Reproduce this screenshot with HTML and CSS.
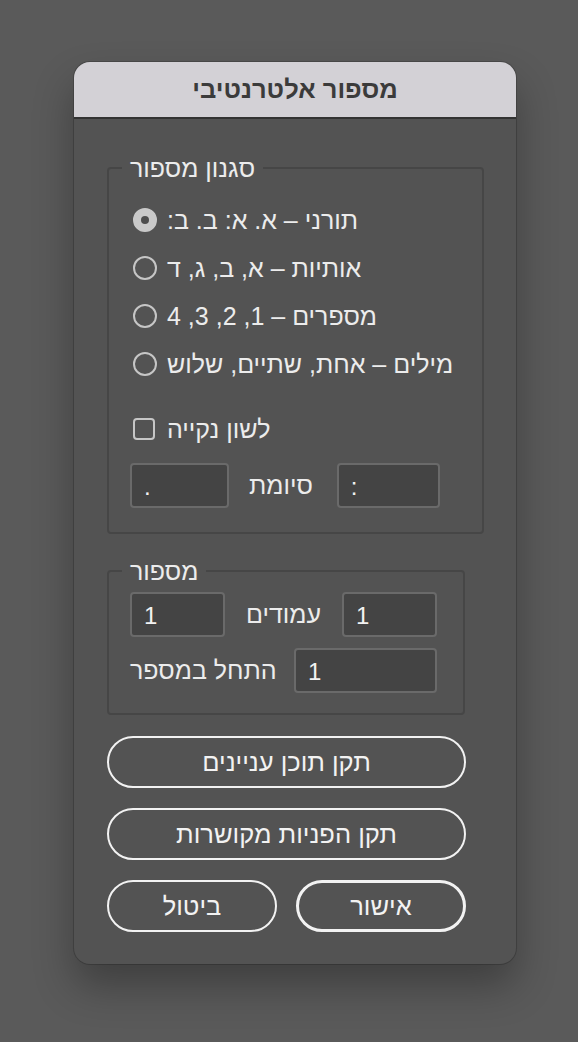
FILE: index.html
```html
<!DOCTYPE html>
<html lang="he">
<head>
<meta charset="utf-8">
<title>מספור אלטרנטיבי</title>
<link rel="stylesheet" href="styles.css">
</head>
<body>
<div class="dialog">
  <div class="titlebar"><span dir="rtl">מספור אלטרנטיבי</span></div>
  <div class="content">
    <fieldset class="group group-style">
      <legend><span dir="rtl">סגנון מספור</span></legend>
      <div class="radio-row"><span class="radio checked"></span><span class="label" dir="rtl">תורני – א. א: ב. ב:</span></div>
      <div class="radio-row"><span class="radio"></span><span class="label" dir="rtl">אותיות – א, ב, ג, ד</span></div>
      <div class="radio-row"><span class="radio"></span><span class="label" dir="rtl">מספרים – 1, 2, 3, 4</span></div>
      <div class="radio-row"><span class="radio"></span><span class="label" dir="rtl">מילים – אחת, שתיים, שלוש</span></div>
      <div class="check-row"><span class="checkbox"></span><span class="label" dir="rtl">לשון נקייה</span></div>
      <div class="field-row suffix-row">
        <div class="input w99">.</div>
        <span class="label suffix-label" dir="rtl">סיומת</span>
        <div class="input w103">:</div>
      </div>
    </fieldset>

    <fieldset class="group group-number">
      <legend><span dir="rtl">מספור</span></legend>
      <div class="field-row spread">
        <div class="input w95">1</div>
        <span class="label" dir="rtl">עמודים</span>
        <div class="input w95">1</div>
      </div>
      <div class="field-row spread start-row">
        <span class="label" dir="rtl">התחל במספר</span>
        <div class="input w143">1</div>
      </div>
    </fieldset>

    <div class="buttons">
      <button class="btn wide" dir="rtl">תקן תוכן עניינים</button>
      <button class="btn wide" dir="rtl">תקן הפניות מקושרות</button>
      <div class="btn-pair">
        <button class="btn half" dir="rtl">ביטול</button>
        <button class="btn half primary" dir="rtl">אישור</button>
      </div>
    </div>
  </div>
</div>
</body>
</html>
```

FILE: styles.css
```css
html, body {
  margin: 0;
  padding: 0;
}
body {
  background: #5a5a5a;
  font-family: "Liberation Sans", "DejaVu Sans", sans-serif;
  color: #ececec;
  width: 578px;
  height: 1042px;
  overflow: hidden;
}
.dialog {
  margin: 62px 0 0 74px;
  width: 442px;
  height: 902px;
  box-sizing: border-box;
  background: #535353;
  border-radius: 16px;
  overflow: hidden;
  box-shadow: 0 22px 40px rgba(0, 0, 0, 0.3), 0 0 0 1px #4a4a4a;
  display: flex;
  flex-direction: column;
}
.titlebar {
  height: 55px;
  background: #d3d1d6;
  border-bottom: 2px solid #333333;
  display: flex;
  align-items: center;
  justify-content: center;
  font-weight: bold;
  font-size: 25.5px;
  color: #3b3b3b;
  flex: none;
}
.content {
  padding: 36px 32px 0 33px;
  display: flex;
  flex-direction: column;
}
.group {
  margin: 0;
  border: 2px solid #464646;
  border-radius: 4px;
  padding: 0;
  min-width: 0;
}
.group legend {
  margin-left: -8px;
  padding: 0 8px;
  font-size: 25px;
  line-height: 26px;
  color: #ececec;
}
.group-style {
  width: 377px;
  box-sizing: border-box;
  padding: 15px 20px 24px 21px;
}
.group-number {
  width: 358px;
  box-sizing: border-box;
  margin-top: 24px;
  padding: 8px 26px 20px 21px;
}
.label {
  font-size: 25px;
  white-space: nowrap;
}
.radio-row {
  height: 48px;
  display: flex;
  align-items: center;
  gap: 10px;
  padding-left: 3px;
}
.radio {
  width: 24px;
  height: 24px;
  box-sizing: border-box;
  border: 2px solid #c6c6c6;
  border-radius: 50%;
  flex: none;
  position: relative;
}
.radio.checked {
  background: #c9c9c9;
  border-color: #c9c9c9;
}
.radio.checked::after {
  content: "";
  position: absolute;
  left: 50%;
  top: 50%;
  width: 8px;
  height: 8px;
  margin: -4px 0 0 -4px;
  border-radius: 50%;
  background: #4d4d4d;
}
.check-row {
  margin-top: 26px;
  height: 30px;
  display: flex;
  align-items: center;
  gap: 12px;
  padding-left: 3px;
}
.checkbox {
  width: 22px;
  height: 22px;
  box-sizing: border-box;
  border: 2px solid #c6c6c6;
  border-radius: 4px;
  flex: none;
}
.field-row {
  display: flex;
  align-items: center;
}
.suffix-row {
  margin-top: 19px;
}
.suffix-label {
  margin: 0 24px 0 20px;
}
.spread {
  justify-content: space-between;
}
.start-row {
  margin-top: 11px;
}
.input {
  height: 45px;
  box-sizing: border-box;
  background: #444444;
  border: 2px solid #6a6a6a;
  border-radius: 4px;
  padding: 3px 12px 0;
  display: flex;
  align-items: center;
  font-size: 24px;
  color: #f2f2f2;
  flex: none;
}
.w99 { width: 99px; }
.w103 { width: 103px; }
.w95 { width: 95px; }
.w143 { width: 143px; }
.buttons {
  margin-top: 21px;
  width: 359px;
  display: flex;
  flex-direction: column;
  gap: 20px;
}
.btn {
  height: 52px;
  box-sizing: border-box;
  border: 2px solid #f2f2f2;
  border-radius: 26px;
  background: transparent;
  color: #f2f2f2;
  font-family: "Liberation Sans", "DejaVu Sans", sans-serif;
  font-size: 25.5px;
  padding: 0;
}
.wide {
  width: 359px;
}
.btn-pair {
  display: flex;
  justify-content: space-between;
}
.half {
  width: 170px;
}
.primary {
  border-width: 3px;
}
```
